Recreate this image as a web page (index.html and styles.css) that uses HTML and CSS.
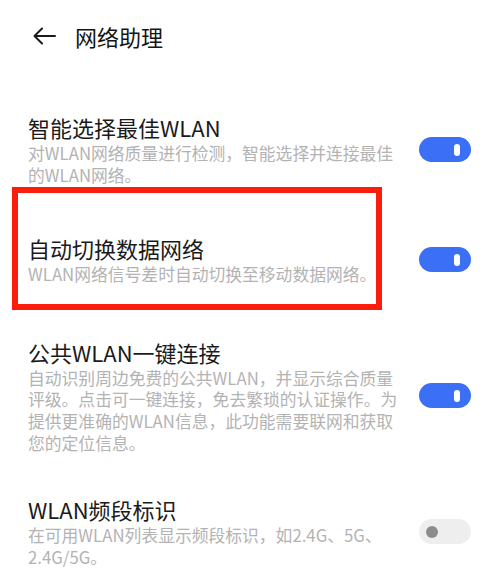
FILE: index.html
```html
<!DOCTYPE html>
<html lang="zh-CN">
<head>
<meta charset="utf-8">
<link rel="stylesheet" href="styles.css">
</head>
<body>
<div class="page">
  <header class="header">
    <svg class="back" width="24" height="18" viewBox="0 0 24 18"><path d="M23 9H2.5M10 1.5L2.5 9L10 16.5" fill="none" stroke="#1a1a1a" stroke-width="2" stroke-linecap="round" stroke-linejoin="round"/></svg>
    <span class="header-title">网络助理</span>
  </header>
  <div class="list">
    <div class="item">
      <div class="text">
        <div class="title">智能选择最佳WLAN</div>
        <div class="desc">对WLAN网络质量进行检测，智能选择并连接最佳<br>的WLAN网络。</div>
      </div>
      <div class="switch on"><span class="knob"></span></div>
    </div>
    <div class="item item-marked">
      <div class="mark"></div>
      <div class="text">
        <div class="title">自动切换数据网络</div>
        <div class="desc">WLAN网络信号差时自动切换至移动数据网络。</div>
      </div>
      <div class="switch on"><span class="knob"></span></div>
    </div>
    <div class="item item-wide-gap">
      <div class="text">
        <div class="title">公共WLAN一键连接</div>
        <div class="desc">自动识别周边免费的公共WLAN，并显示综合质量<br>评级。点击可一键连接，免去繁琐的认证操作。为<br>提供更准确的WLAN信息，此功能需要联网和获取<br>您的定位信息。</div>
      </div>
      <div class="switch on"><span class="knob"></span></div>
    </div>
    <div class="item item-narrow-gap">
      <div class="text">
        <div class="title">WLAN频段标识</div>
        <div class="desc">在可用WLAN列表显示频段标识，如2.4G、5G、<br>2.4G/5G。</div>
      </div>
      <div class="switch off"><span class="dot"></span></div>
    </div>
  </div>
</div>
</body>
</html>
```
FILE: styles.css
```css
* { box-sizing: border-box; }
html, body {
  margin: 0;
  padding: 0;
  background: #ffffff;
}
body {
  font-family: "Noto Sans CJK SC", "Noto Sans", sans-serif;
  color: #1a1a1a;
  width: 500px;
  height: 579px;
  overflow: hidden;
}
.header {
  height: 72px;
  display: flex;
  align-items: center;
  padding-left: 32px;
}
.back { display: block; }
.header-title {
  margin-left: 19px;
  font-size: 22px;
  line-height: 28px;
  color: #141414;
}
.list {
  padding-top: 41px;
  display: flex;
  flex-direction: column;
  gap: 48px;
}
.item {
  position: relative;
  display: flex;
  align-items: center;
  justify-content: space-between;
  padding: 0 29px 0 28px;
}
.item-wide-gap { margin-top: 4px; }
.item-narrow-gap { margin-top: -7px; }
.text { width: 372px; }
.title {
  font-size: 22px;
  line-height: 28px;
  margin-bottom: 2px;
  color: #1a1a1a;
  white-space: nowrap;
}
.desc {
  font-size: 16.8px;
  line-height: 21.6px;
  color: #b3b3b3;
  white-space: nowrap;
}
.switch {
  width: 52px;
  height: 25px;
  border-radius: 13px;
  display: flex;
  align-items: center;
  flex-shrink: 0;
}
.switch.on {
  background: #3a6ff6;
  justify-content: flex-end;
  padding-right: 11px;
}
.knob {
  width: 6px;
  height: 12px;
  border-radius: 3px;
  background: #ffffff;
}
.switch.off {
  background: #eeeeee;
  padding-left: 7px;
}
.dot {
  width: 12px;
  height: 12px;
  border-radius: 50%;
  background: #8c8c8c;
}
.mark {
  position: absolute;
  left: 12px;
  top: -47px;
  width: 370px;
  height: 123px;
  border: 6px solid #fc1c0c;
  pointer-events: none;
}
```
